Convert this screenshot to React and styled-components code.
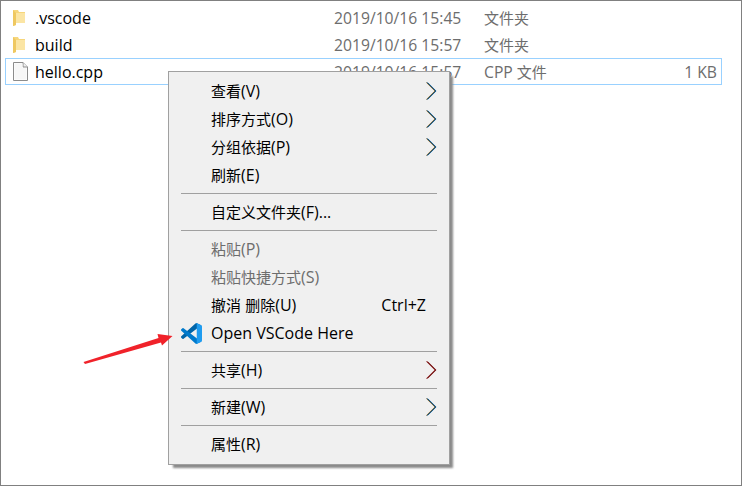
import styled, { createGlobalStyle } from "styled-components";

const GlobalStyle = createGlobalStyle`
  html, body { margin: 0; padding: 0; background: #fff; }
  body { font-family: "Open Sans", "Noto Sans CJK SC", sans-serif; }
`;

const Window = styled.div`
  position: relative;
  box-sizing: border-box;
  width: 742px;
  height: 486px;
  padding: 3px 19px 0 4px;
  border: 1px solid #808080;
  overflow: hidden;
  background: #fff;
`;

const FileRow = styled.div`
  display: grid;
  grid-template-columns: 22px 299px 150px 1fr auto;
  align-items: center;
  box-sizing: border-box;
  height: 27px;
  padding: 0 4px 0 7px;
  border: 1px solid ${(p) => (p.$selected ? "#99d1ff" : "transparent")};
  font-size: 16px;
  line-height: 22px;
`;

const FileName = styled.span`
  color: #000;
`;

const FileMeta = styled.span`
  color: #6d6d6d;
  font-size: 15.7px;
`;

const Menu = styled.div`
  position: absolute;
  left: 167px;
  top: 70px;
  box-sizing: border-box;
  width: 282px;
  height: 394px;
  padding: 5px 12px;
  border: 1px solid #a0a0a0;
  background: #f0f0f0;
  box-shadow: 4px 4px 2px -1px #8a8a8a;
`;

const MenuItem = styled.div`
  display: flex;
  align-items: center;
  height: 28px;
  padding-left: 30px;
  font-size: 16px;
  line-height: 22px;
  color: ${(p) => (p.$disabled ? "#6d6d6d" : "#000")};
`;

const MenuIcon = styled.span`
  position: absolute;
  left: 12px;
  display: flex;
`;

const ItemLabel = styled.span`
  flex: 1;
`;

const Shortcut = styled.span`
  margin-right: 11px;
`;

const Divider = styled.div`
  height: 1px;
  margin: 4px 0;
  background: #a0a0a0;
`;

const SideArrow = styled.svg`
  display: block;
  width: 11px;
  height: 18px;
`;

const Pointer = styled.svg`
  position: absolute;
  left: 0;
  top: 0;
`;

const Cjk = styled.span`
  font-size: 15px;
`;

// latin runs are a bit bigger than the chinese ones in the shot
function Mixed({ text }) {
  if (!text) return null;
  return text
    .split(/([\u4e00-\u9fff]+)/)
    .map((part, i) => (i % 2 ? <Cjk key={i}>{part}</Cjk> : part));
}

function Folder() {
  return (
    <svg width="13" height="17" viewBox="0 0 13 17">
      <path d="M0 1h5l1 2h6v11H3v2l-3 1z" fill="#f6d67c" />
      <path d="M3 4h9v10H3z" fill="#fbe5a4" />
      <path d="M0 1v16l3-1V4z" fill="#efc860" />
    </svg>
  );
}

function FileIcon() {
  return (
    <svg width="15" height="19" viewBox="0 0 15 19">
      <path d="M.5.5h9.5l4.500 4.500v13.500H.5z" fill="#fff" stroke="#8c8c8c" />
      <path d="M10 .5v4.500h4.500" fill="#f0f0f0" stroke="#8c8c8c" />
      <path d="M1.500 1.500h8v4.500h4v11.500h-12z" fill="#f7f7f7" />
    </svg>
  );
}

function Chevron({ color = "#000", left = "#d08a30", right = "#2080d0" }) {
  return (
    <SideArrow viewBox="0 0 11 18">
      <path d="M1 .5l8.500 8.500L1 17.500" fill="none" stroke={left} strokeWidth="1" transform="translate(-.6 0)" />
      <path d="M1 .5l8.500 8.500L1 17.500" fill="none" stroke={right} strokeWidth="1" transform="translate(.6 0)" />
      <path d="M1 .5l8.500 8.500L1 17.500" fill="none" stroke={color} strokeWidth="1" />
    </SideArrow>
  );
}

function VSCodeLogo() {
  return (
    <svg width="21" height="21" viewBox="0 0 100 100">
      <path fill="#0065A9" d="M96.460 10.800L75.860.870a6.230 6.230 0 0 0-7.100 1.200L1.340 63.560a4.160 4.160 0 0 0 0 6.170l5.510 5.010a4.160 4.160 0 0 0 5.320.240L93.400 13.300c2.720-2.070 6.600-.130 6.600 3.280v-.240a6.250 6.250 0 0 0-3.540-5.630z" />
      <path fill="#007ACC" d="M96.460 89.200L75.860 99.130a6.230 6.230 0 0 1-7.100-1.200L1.340 36.440a4.160 4.160 0 0 1 0-6.170l5.510-5.010a4.160 4.160 0 0 1 5.320-.240L93.400 86.700c2.720 2.070 6.600.130 6.600-3.280v.240a6.250 6.250 0 0 1-3.540 5.630z" />
      <path fill="#1F9CF0" d="M75.860 99.130a6.230 6.230 0 0 1-7.100-1.200c2.300 2.300 6.240.670 6.240-2.580V4.650c0-3.250-3.940-4.880-6.240-2.580a6.230 6.230 0 0 1 7.100-1.200l20.600 9.900A6.250 6.250 0 0 1 100 16.400v67.200a6.250 6.250 0 0 1-3.540 5.630z" />
    </svg>
  );
}

const files = [
  { name: ".vscode", date: "2019/10/16 15:45", type: "文件夹", icon: <Folder /> },
  { name: "build", date: "2019/10/16 15:57", type: "文件夹", icon: <Folder /> },
  { name: "hello.cpp", date: "2019/10/16 15:57", type: "CPP 文件", size: "1 KB", icon: <FileIcon />, selected: true },
];

const menu = [
  { label: "查看(V)", arrow: true },
  { label: "排序方式(O)", arrow: true },
  { label: "分组依据(P)", arrow: true },
  { label: "刷新(E)" },
  { divider: true },
  { label: "自定义文件夹(F)..." },
  { divider: true },
  { label: "粘贴(P)", disabled: true },
  { label: "粘贴快捷方式(S)", disabled: true },
  { label: "撤消 删除(U)", shortcut: "Ctrl+Z" },
  { label: "Open VSCode Here", logo: true },
  { divider: true },
  { label: "共享(H)", arrow: "red" },
  { divider: true },
  { label: "新建(W)", arrow: true },
  { divider: true },
  { label: "属性(R)" },
];

export default function App() {
  return (
    <>
      <GlobalStyle />
      <Window>
        {files.map((f) => (
          <FileRow key={f.name} $selected={f.selected}>
            {f.icon}
            <FileName>{f.name}</FileName>
            <FileMeta>{f.date}</FileMeta>
            <FileMeta><Mixed text={f.type} /></FileMeta>
            <FileMeta>{f.size}</FileMeta>
          </FileRow>
        ))}
        <Menu>
          {menu.map((m, i) =>
            m.divider ? (
              <Divider key={i} />
            ) : (
              <MenuItem key={i} $disabled={m.disabled}>
                {m.logo && (
                  <MenuIcon>
                    <VSCodeLogo />
                  </MenuIcon>
                )}
                <ItemLabel><Mixed text={m.label} /></ItemLabel>
                {m.shortcut && <Shortcut>{m.shortcut}</Shortcut>}
                {m.arrow === "red" && <Chevron color="#5a0000" left="#c06060" right="#a04040" />}
                {m.arrow === true && <Chevron color="#00304a" />}
              </MenuItem>
            )
          )}
        </Menu>
        <Pointer width="180" height="370" viewBox="0 0 180 370">
          <path d="M82.500 361L157.500 337L156.500 333L171.500 335L161 344.500L160 341.500L84 363z" fill="#f0222a" />
        </Pointer>
      </Window>
    </>
  );
}
